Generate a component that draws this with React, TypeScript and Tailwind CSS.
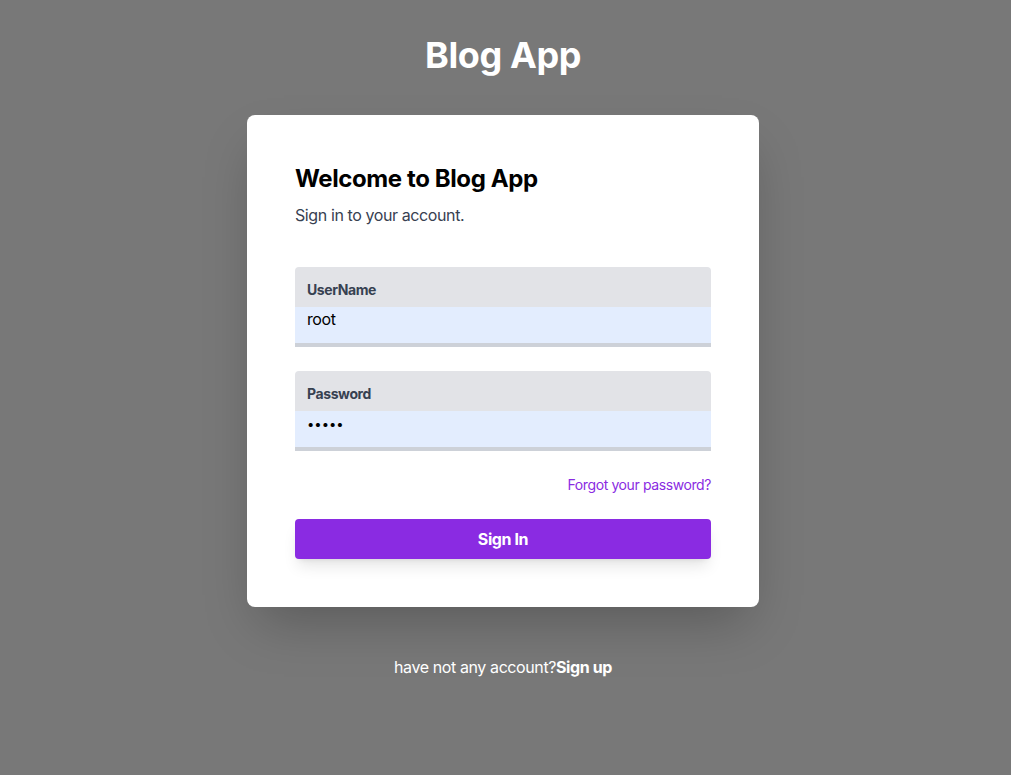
const Field = ({ label, value, type }: { label: string; value: string; type: string }): JSX.Element => {
    return (
        <label className="block rounded-t overflow-hidden border-b-4 border-[#cdd1d8]">
            <div className="bg-[#e2e3e7] px-3 pt-3 pb-[7px] h-[40px] flex items-center">
                <span className="text-sm font-bold text-[#374151]">{label}</span>
            </div>
            <div className="bg-[#e3edfe] px-3 h-[36px]">
                <input
                    type={type}
                    value={value}
                    readOnly
                    className={type === "password"
                        ? "w-full h-[24px] bg-transparent outline-none text-[13px] tracking-normal text-black"
                        : "w-full h-[24px] bg-transparent outline-none text-base tracking-tight text-black"}
                />
            </div>
        </label>
    );
};

const App = (): JSX.Element => {
    return (
        <div className="min-h-screen w-full bg-[#787878] flex flex-col items-center pt-[35px] pr-[5px] tracking-tight font-['Inter',sans-serif]">
            <h1 className="text-4xl font-bold text-white h-[40px] leading-[40px]">Blog App</h1>

            <div className="mt-[40px] w-[512px] bg-white rounded-lg shadow-2xl px-12 pt-12 pb-12">
                <h2 className="text-2xl font-bold text-black leading-8">Welcome to Blog App</h2>
                <p className="mt-2 text-base text-[#374151]">Sign in to your account.</p>

                <div className="mt-10">
                    <Field label="UserName" value="root" type="text" />
                </div>
                <div className="mt-6">
                    <Field label="Password" value="admin" type="password" />
                </div>

                <div className="mt-6 flex justify-end">
                    <a className="text-sm text-[#8a2be2]">Forgot your password?</a>
                </div>

                <button className="mt-6 w-full h-[40px] rounded bg-[#8a2be2] text-white font-bold text-base tracking-tight shadow-lg">
                    Sign In
                </button>
            </div>

            <p className="mt-12 text-base text-white">
                have not any account?<span className="font-bold">Sign up</span>
            </p>
        </div>
    );
};

export default App;
